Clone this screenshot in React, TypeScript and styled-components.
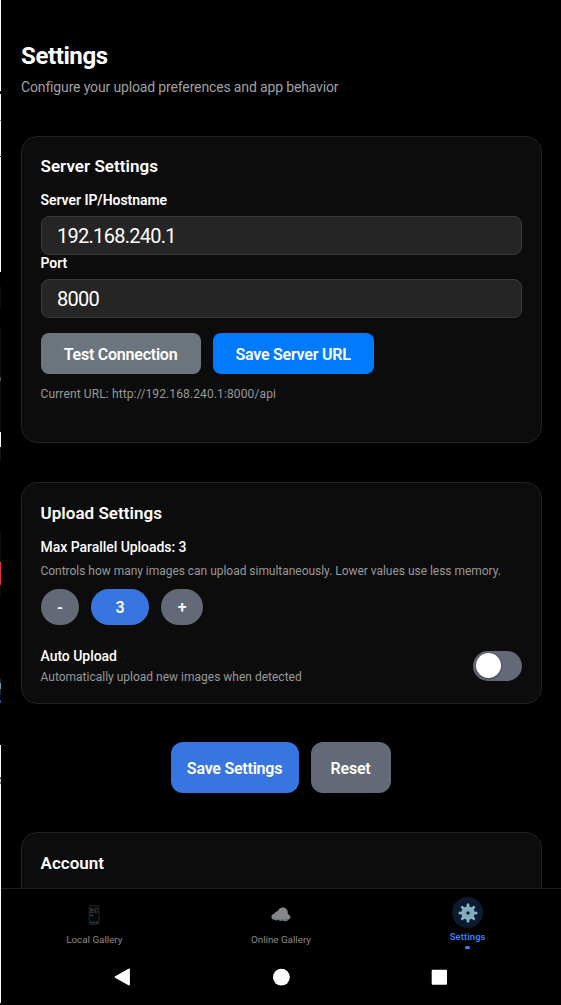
import React from "react";
import styled, { createGlobalStyle } from "styled-components";

const GlobalStyle = createGlobalStyle`
  * { box-sizing: border-box; }
  body { margin: 0; background: #000; font-family: Roboto, "Liberation Sans", sans-serif; }
  button, input { font-family: inherit; margin: 0; }
`;

const Screen = styled.div`
  display: flex;
  width: 561px;
  height: 1005px;
  overflow: hidden;
  background: #000;
  color: #fff;
`;

const EdgeStrip = styled.div`
  flex: none;
  width: 1px;
  height: 1005px;
  background: linear-gradient(
    #fff 0 91px, #333 91px 92px, #000 92px 94px, #fff 94px 120px,
    #888 120px 121px, #fff 121px 156px, #333 156px 157px, #fff 157px 272px,
    #000 272px 286px, #0c0c0c 286px 308px, #000 308px 329px, #0c0c0c 329px 377px,
    #555 377px 381px, #0c0c0c 381px 432px, #fff 432px 447px, #181818 447px 461px,
    #000 461px 531px, #0c0c0c 531px 562px, #e23840 562px 585px, #0c0c0c 585px 597px,
    #000 597px 679px, #12304a 679px 683px, #6f9aa5 683px 689px, #12304a 689px 695px,
    #000 695px 700px, #2356b0 700px 703px, #000 703px 745px, #fff 745px 777px,
    #555 777px 779px, #ccc 779px 782px, #777 782px 784px, #fff 784px 1003px, #000 1003px
  );
`;

const Phone = styled.div`
  flex: 1;
  display: flex;
  flex-direction: column;
  min-width: 0;
`;

const Content = styled.main`
  height: 888px;
  padding: 40px 19px 0 20px;
  overflow: hidden;
`;

const Title = styled.h1`
  margin: 0;
  font-size: 24px;
  line-height: 32px;
  font-weight: 700;
  letter-spacing: -0.4px;
`;

const Subtitle = styled.p`
  margin: 5px 0 39px;
  font-size: 14px;
  line-height: 20px;
  letter-spacing: -0.147px;
  color: #a0a0a0;
`;

const Card = styled.section<{ $height: number; $gap?: number; $top?: number }>`
  height: ${(p) => p.$height}px;
  margin-bottom: ${(p) => p.$gap ?? 0}px;
  padding: ${(p) => p.$top ?? 19}px 19.5px 19px 18.5px;
  border: 1px solid #222;
  border-radius: 16px;
  background: #0c0c0c;
`;

const CardTitle = styled.h2`
  margin: 0 0 16px;
  font-size: 17px;
  line-height: 20px;
  font-weight: 600;
  letter-spacing: 0.03px;
`;

const Label = styled.label<{ $gap?: number; $weight?: number }>`
  display: block;
  margin-bottom: ${(p) => p.$gap ?? 8}px;
  font-size: 14px;
  line-height: 16px;
  font-weight: ${(p) => p.$weight ?? 500};
  letter-spacing: -0.04px;
`;

const Input = styled.input`
  display: block;
  width: 100%;
  height: 39px;
  padding: 0 15.5px;
  border: 1px solid #3a3a3a;
  border-radius: 8px;
  background: #252525;
  color: #fff;
  font-size: 20px;
  letter-spacing: -0.72px;
  outline: none;
`;

const ButtonRow = styled.div<{ $top?: number }>`
  display: flex;
  gap: 12px;
  margin-top: ${(p) => p.$top ?? 0}px;
`;

const Actions = styled.div`
  display: flex;
  justify-content: center;
  gap: 12px;
  margin-bottom: 39px;
  padding-right: 2px;
`;

const Button = styled.button<{ $w: number; $h: number; $bg: string; $r: number }>`
  width: ${(p) => p.$w}px;
  height: ${(p) => p.$h}px;
  padding: 2px 0 0;
  border: 0;
  border-radius: ${(p) => p.$r}px;
  background: ${(p) => p.$bg};
  color: #fff;
  font-size: 16px;
  font-weight: 600;
  letter-spacing: -0.23px;
  white-space: nowrap;
`;

const StepButton = styled(Button)`
  padding-top: 0;
`;

const Hint = styled.p<{ $top?: number; $spacing?: number }>`
  margin: ${(p) => p.$top ?? 0}px 0 0;
  font-size: 12px;
  line-height: 16px;
  letter-spacing: ${(p) => p.$spacing ?? 0}px;
  color: #999;
  white-space: nowrap;
`;

const ToggleRow = styled.div`
  display: flex;
  align-items: center;
  justify-content: space-between;
  margin-top: 23px;
`;

const Toggle = styled.div`
  width: 49px;
  height: 30px;
  margin-bottom: 2px;
  padding: 2px 3px;
  border-radius: 15px;
  background: #636976;
`;

const Knob = styled.div`
  width: 25px;
  height: 25px;
  border-radius: 50%;
  background: #fff;
  box-shadow: 0 1px 3px rgba(0, 0, 0, 0.35);
`;

const TabBar = styled.nav`
  display: grid;
  grid-template-columns: repeat(3, 1fr);
  height: 62px;
  border-top: 1px solid #1e1e1e;
`;

const Tab = styled.div<{ $active?: boolean }>`
  display: flex;
  flex-direction: column;
  align-items: center;
  padding-top: ${(p) => (p.$active ? 8 : 10)}px;
  font-size: ${(p) => (p.$active ? 9.3 : 9.8)}px;
  line-height: 12px;
  font-weight: ${(p) => (p.$active ? 600 : 400)};
  letter-spacing: ${(p) => (p.$active ? 0.15 : 0)}px;
  color: ${(p) => (p.$active ? "#3b82f6" : "#8a8a8a")};
`;

const TabIcon = styled.div<{ $active?: boolean }>`
  display: flex;
  align-items: center;
  justify-content: center;
  width: 31px;
  height: 31px;
  margin-bottom: ${(p) => (p.$active ? 3 : 4)}px;
  border-radius: 50%;
  background: ${(p) => (p.$active ? "#0d1a30" : "transparent")};
`;

const Dot = styled.div`
  width: 5px;
  height: 3px;
  margin-top: 3px;
  border-radius: 1.5px;
  background: #3b82f6;
`;

const SystemBar = styled.div`
  display: flex;
  justify-content: space-between;
  align-items: center;
  height: 54px;
  padding: 0 113px 0 112px;
`;

const PhoneIcon = () => (
  <svg width="12" height="20" viewBox="0 0 12 20">
    <rect x="1.2" y="0.7" width="9.8" height="18.4" rx="1.2" fill="#05080a" stroke="#242424" strokeWidth="1.1" />
    <path d="M2.4 3.9h2M6.6 3.9h1M2.4 5.9h1M8.6 6.9h1" stroke="#8a5222" strokeWidth="1.2" />
    <path d="M4.2 5.4h1.2M2.4 7.4h1M6.6 5.9h1.2" stroke="#2b7068" strokeWidth="1.2" />
    <path d="M8.6 3.9h1.2M4.4 7.4h1M6.6 7.4h1" stroke="#74404c" strokeWidth="1.2" />
    <path d="M2.4 10.3h3M2.4 17.3h2M5.2 17.3h2" stroke="#27657e" strokeWidth="1.1" />
    <path d="M8 17.3h1.8" stroke="#6b4c5a" strokeWidth="1.1" />
  </svg>
);

const CloudIcon = () => (
  <svg width="20" height="15" viewBox="0 0 20 15">
    <path d="M0.5 10C0.4 8 2 6.6 3.8 6.6C3.8 5 5.3 4 6.9 4.3C7.4 1.8 9.3.5 11.7.5C14.7.5 17 2.6 16.7 5.6C16.6 6.5 16.8 7 17.4 7.5C20.2 8.6 19.9 12.3 17.2 12.5C16.4 14.2 13.5 14.8 12 13.3C10.2 14 8.5 13.7 7.4 12.7C5.8 13.5 4 13.3 3.1 12.4C1.6 12.7.5 11.6.5 10Z" fill="#858789" />
    <path d="M.6 10.2C2 11.7 3.4 10.7 4.4 11.3C6 12.2 7.1 11.5 8.2 11.9C10.2 12.8 11.2 11.4 13 12C15 12.4 17.2 11.5 19.2 10.3C19 11.8 18 12.4 17.2 12.5C16.4 14.2 13.5 14.8 12 13.3C10.2 14 8.5 13.7 7.4 12.7C5.8 13.5 4 13.3 3.1 12.4C1.6 12.7.6 11.6.6 10.2Z" fill="#6b777b" />
  </svg>
);

const GearIcon = () => (
  <svg width="20" height="20" viewBox="0 0 20 20">
    <g fill="#84b1c0">
      {[0, 45, 90, 135].map((a) => (
        <path key={a} d="M8.4 4L8.8.6H11.2L11.6 4V16L11.2 19.4H8.8L8.4 16Z" transform={`rotate(${a} 10 10)`} />
      ))}
      <circle cx="10" cy="10" r="6.6" />
    </g>
    <circle cx="10" cy="10" r="3.4" fill="#8fbdcb" stroke="#6b9db0" strokeWidth="0.9" />
    <circle cx="10" cy="10" r="1.8" fill="#0d1a30" />
  </svg>
);

export default function App() {
  return (
    <>
      <GlobalStyle />
      <Screen>
        <EdgeStrip />
        <Phone>
          <Content>
            <Title>Settings</Title>
            <Subtitle>Configure your upload preferences and app behavior</Subtitle>

            <Card $height={307} $gap={39}>
              <CardTitle>Server Settings</CardTitle>
              <Label $weight={600}>Server IP/Hostname</Label>
              <Input defaultValue="192.168.240.1" />
              <Label $weight={600}>Port</Label>
              <Input defaultValue="8000" />
              <ButtonRow $top={15}>
                <Button $w={160} $h={41} $bg="#6c757d" $r={8}>Test Connection</Button>
                <Button $w={161} $h={41} $bg="#007bff" $r={8}>Save Server URL</Button>
              </ButtonRow>
              <Hint $top={12} $spacing={0.12}>Current URL: http://192.168.240.1:8000/api</Hint>
            </Card>

            <Card $height={222} $gap={38} $top={20}>
              <CardTitle>Upload Settings</CardTitle>
              <Label>Max Parallel Uploads: 3</Label>
              <Hint $spacing={-0.03}>Controls how many images can upload simultaneously. Lower values use less memory.</Hint>
              <ButtonRow $top={10}>
                <StepButton $w={38.5} $h={36} $bg="#636976" $r={18}>-</StepButton>
                <StepButton $w={58} $h={36} $bg="#3776e0" $r={18}>3</StepButton>
                <StepButton $w={42} $h={36} $bg="#636976" $r={18}>+</StepButton>
              </ButtonRow>
              <ToggleRow>
                <div>
                  <Label $gap={5}>Auto Upload</Label>
                  <Hint>Automatically upload new images when detected</Hint>
                </div>
                <Toggle><Knob /></Toggle>
              </ToggleRow>
            </Card>

            <Actions>
              <Button $w={128} $h={51} $bg="#3776e0" $r={12}>Save Settings</Button>
              <Button $w={80} $h={51} $bg="#636976" $r={12}>Reset</Button>
            </Actions>

            <Card $height={200} $top={20}>
              <CardTitle>Account</CardTitle>
            </Card>
          </Content>

          <TabBar>
            <Tab>
              <TabIcon><PhoneIcon /></TabIcon>
              Local Gallery
            </Tab>
            <Tab>
              <TabIcon><CloudIcon /></TabIcon>
              Online Gallery
            </Tab>
            <Tab $active>
              <TabIcon $active><GearIcon /></TabIcon>
              Settings
              <Dot />
            </Tab>
          </TabBar>

          <SystemBar>
            <svg width="18" height="18" viewBox="0 0 18 18">
              <path d="M2.6 9L15.9 1.6V16.4Z" fill="#fff" stroke="#fff" strokeWidth="2" strokeLinejoin="round" />
            </svg>
            <svg width="18" height="18" viewBox="0 0 18 18">
              <circle cx="9.4" cy="9.2" r="8.4" fill="#fff" />
            </svg>
            <svg width="18" height="18" viewBox="0 0 18 18">
              <rect x="1.7" y="1.7" width="15.3" height="15" rx="1" fill="#fff" />
            </svg>
          </SystemBar>
        </Phone>
      </Screen>
    </>
  );
}
